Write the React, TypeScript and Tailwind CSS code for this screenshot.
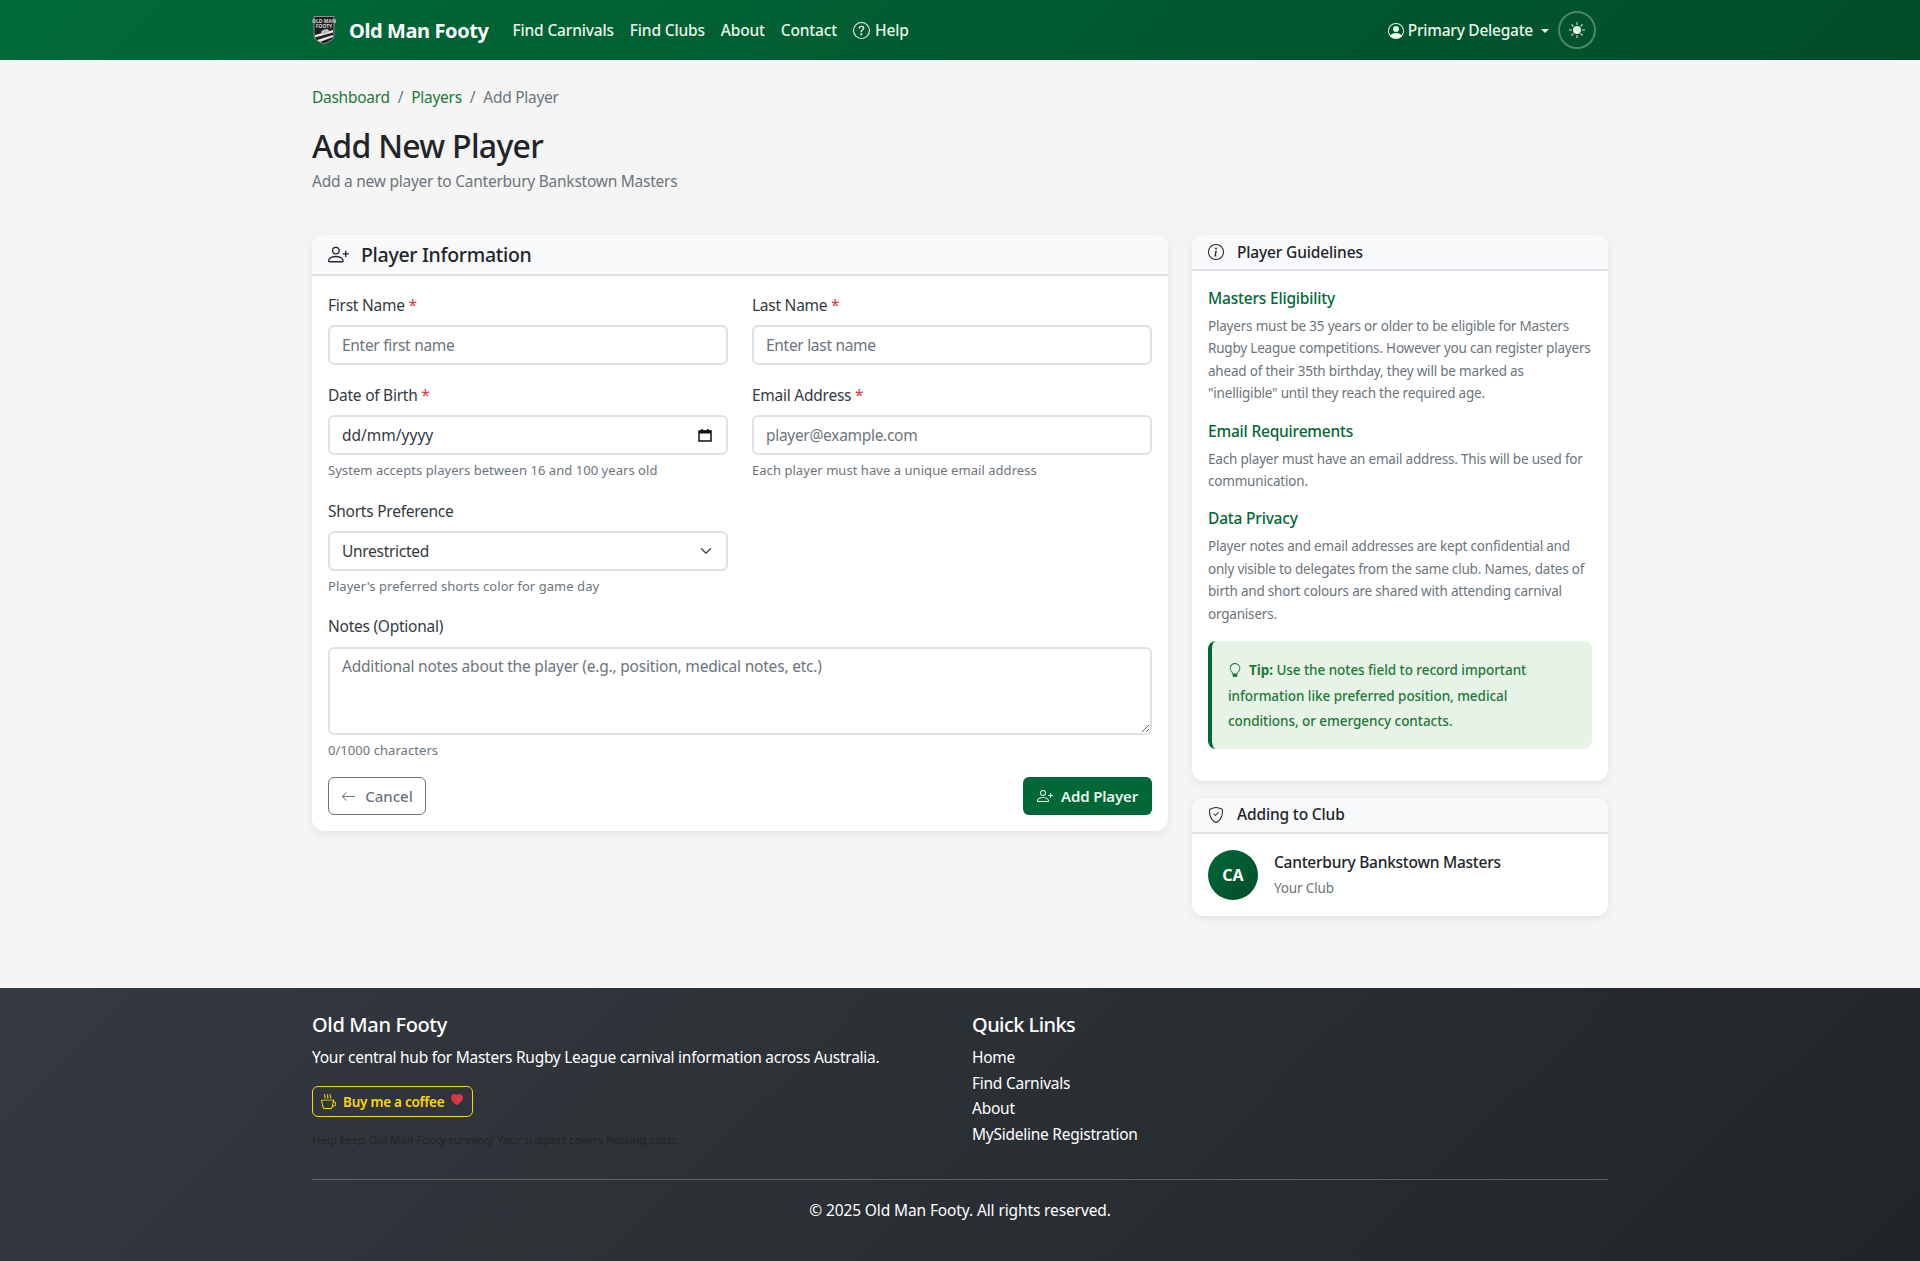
import React from 'react';
import {
  BsArrowLeft,
  BsChevronDown,
  BsCupHot,
  BsHeartFill,
  BsInfoCircle,
  BsLightbulb,
  BsPersonCircle,
  BsPersonPlus,
  BsQuestionCircle,
  BsShieldCheck,
  BsSunFill,
} from 'react-icons/bs';

const inputClass =
  'block w-full h-10 rounded-md border-2 border-[#dee2e6] bg-white px-[12px] text-[15.5px] tracking-[-0.3px] text-[#343a40] placeholder:text-[#6c757d] outline-none';

function Logo() {
  return (
    <svg viewBox="0 0 24 30" className="w-6 h-[30px]">
      <path d="M2 1.5h20v19.5c0 3-4.5 5.5-10 8-5.5-2.500-10-5-10-8z" fill="#1f1f1f" stroke="#8f8f8f" strokeWidth="1" />
      <text x="12" y="7.5" textAnchor="middle" fontSize="5" fontWeight="700" fill="#d4d4d4">OLD MAN</text>
      <text x="12" y="12.500" textAnchor="middle" fontSize="5" fontWeight="700" fill="#d4d4d4">FOOTY</text>
      <path d="M3 20l18-5v2.500L3 22.500zM5 25l16-5v2L8 27z" fill="#e5e5e5" />
      <ellipse cx="13" cy="16.500" rx="4" ry="2" fill="#bdbdbd" transform="rotate(-20 13 16.500)" />
    </svg>
  );
}

function CalendarIcon() {
  return (
    <svg viewBox="0 0 14 14" className="w-[14px] h-[14px]">
      <path d="M1 3h12v10H1z" fill="none" stroke="#111" strokeWidth="1.500" />
      <path d="M1 2.500h12v3H1zM3.500 1h1.500v2H3.500zM9 1h1.500v2H9z" fill="#111" />
    </svg>
  );
}

function Label({ text, required }: { text: string; required?: boolean }) {
  return (
    <label className="block h-[20px] mb-[10px] text-[15.5px] leading-[20px] tracking-[-0.25px] text-[#343a40]">
      {text}
      {required && <span className="text-[#dc3545]"> *</span>}
    </label>
  );
}

function Help({ children }: { children: React.ReactNode }) {
  return <p className="mt-[6px] h-[18px] text-[13px] leading-[18px] tracking-[0.05px] text-[#6c757d]">{children}</p>;
}

function CardHeader({ icon, title, large }: { icon: React.ReactNode; title: string; large?: boolean }) {
  return (
    <div
      className={`flex items-center bg-[#f8f9fa] border-b-2 border-[#dee2e6] rounded-t-xl px-4 ${
        large ? 'h-[41px] gap-3' : 'h-[36px] gap-[13px]'
      }`}
    >
      {icon}
      <h2
        className={`font-medium text-[#212529] ${
          large ? 'text-[19.500px] tracking-[-0.3px]' : 'pt-[1px] text-[15.500px] tracking-[-0.15px]'
        }`}
      >
        {title}
      </h2>
    </div>
  );
}

function Guideline({ title, children }: { title: string; children: React.ReactNode }) {
  return (
    <div className="mb-[14px]">
      <h3 className="text-[15.500px] leading-[24px] font-medium tracking-[-0.2px] text-[#006837] mb-[5px]">{title}</h3>
      <p className="text-[13.500px] leading-[22.400px] tracking-[-0.2px] text-[#6c757d]">{children}</p>
    </div>
  );
}

export default function App() {
  return (
    <div className="min-h-[1261px] flex flex-col bg-[#f5f5f5] font-['Noto_Sans',sans-serif]">
      <nav className="h-[60px] bg-[linear-gradient(135deg,#006b38,#004d29)] text-white">
        <div className="w-[1296px] mx-auto h-full flex items-center">
          <Logo />
          <span className="ml-[13px] pt-[1px] text-[20px] font-bold tracking-[-0.4px]">Old Man Footy</span>
          <div className="ml-6 pt-[1px] flex items-center gap-4 text-[15.500px] font-medium tracking-[-0.17px] text-[#e8f5ec]">
            <a>Find Carnivals</a>
            <a>Find Clubs</a>
            <a>About</a>
            <a>Contact</a>
            <a className="flex items-center gap-[5px]">
              <BsQuestionCircle className="w-[17px] h-[17px]" />
              Help
            </a>
          </div>
          <div className="ml-auto pt-[1px] flex items-center mr-[12px] text-[#e8f5ec]">
            <BsPersonCircle className="w-4 h-4" />
            <span className="ml-[4px] text-[15.500px] font-medium tracking-[-0.25px]">Primary Delegate</span>
            <span className="ml-2 border-x-[4px] border-x-transparent border-t-[4px] border-t-[#e8f5ec]" />
            <button className="ml-[9px] -mt-[1px] w-[38px] h-[38px] rounded-full border-2 border-white/30 flex items-center justify-center">
              <BsSunFill className="w-4 h-4" />
            </button>
          </div>
        </div>
      </nav>

      <main className="w-[1296px] mx-auto flex-1">
        <div className="mt-[26px] flex items-center gap-2 text-[15.500px] leading-[22px] tracking-[-0.28px]">
          <a className="text-[#1c7a35]">Dashboard</a>
          <span className="text-[#6c757d]">/</span>
          <a className="text-[#1c7a35]">Players</a>
          <span className="text-[#6c757d]">/</span>
          <span className="text-[#6c757d]">Add Player</span>
        </div>
        <h1 className="mt-[19px] text-[32px] leading-[38px] font-medium tracking-[-0.7px] text-[#212529]">Add New Player</h1>
        <p className="mt-[4px] text-[15.500px] leading-[24px] tracking-[-0.25px] text-[#6c757d]">
          Add a new player to Canterbury Bankstown Masters
        </p>

        <div className="mt-[42px] flex items-start gap-6">
          <section className="w-[856px] bg-white rounded-xl shadow-[0_2px_10px_rgba(0,0,0,0.08)]">
            <CardHeader
              large
              title="Player Information"
              icon={<BsPersonPlus className="w-[21px] h-[21px] text-[#212529]" />}
            />
            <div className="px-4 pt-[19px] pb-4">
              <div className="grid grid-cols-2 gap-x-6">
                <div>
                  <Label text="First Name" required />
                  <input className={inputClass} placeholder="Enter first name" />
                </div>
                <div>
                  <Label text="Last Name" required />
                  <input className={inputClass} placeholder="Enter last name" />
                </div>
                <div className="mt-[20px]">
                  <Label text="Date of Birth" required />
                  <div className="relative">
                    <input className={`${inputClass} tracking-[0px]`} defaultValue="dd/mm/yyyy" />
                    <span className="absolute right-[16px] top-[13px]">
                      <CalendarIcon />
                    </span>
                  </div>
                  <Help>System accepts players between 16 and 100 years old</Help>
                </div>
                <div className="mt-[20px]">
                  <Label text="Email Address" required />
                  <input className={inputClass} placeholder="player@example.com" />
                  <Help>Each player must have a unique email address</Help>
                </div>
                <div className="mt-[22px]">
                  <Label text="Shorts Preference" />
                  <div className="relative">
                    <select className={`${inputClass} appearance-none pt-[1px]`} defaultValue="Unrestricted">
                      <option>Unrestricted</option>
                    </select>
                    <BsChevronDown className="absolute right-[16px] top-[14px] w-3 h-3 stroke-[1] text-[#343a40]" />
                  </div>
                  <Help>Player's preferred shorts color for game day</Help>
                </div>
              </div>
              <div className="mt-[21px]">
                <Label text="Notes (Optional)" />
                <textarea
                  className="block w-full h-[88px] mt-[11px] rounded-md border-2 border-[#dee2e6] bg-white px-[12px] py-[6px] text-[15.500px] tracking-[-0.2px] text-[#212529] placeholder:text-[#6c757d] outline-none"
                  placeholder="Additional notes about the player (e.g., position, medical notes, etc.)"
                />
                <Help>0/1000 characters</Help>
              </div>
              <div className="mt-[18px] flex items-center justify-between">
                <button className="h-[38px] w-[98px] flex items-center justify-center gap-[9px] rounded-md border border-[#6c757d] text-[15px] font-medium text-[#6c757d]">
                  <BsArrowLeft className="w-[15px] h-[15px]" />
                  Cancel
                </button>
                <button className="h-[38px] w-[129px] flex items-center justify-center gap-2 rounded-md bg-[#006837] text-[15px] font-semibold tracking-[-0.15px] text-[#e8f5ec]">
                  <BsPersonPlus className="w-4 h-4" />
                  Add Player
                </button>
              </div>
            </div>
          </section>

          <aside className="w-[416px]">
            <section className="bg-white rounded-xl shadow-[0_2px_10px_rgba(0,0,0,0.08)]">
              <CardHeader title="Player Guidelines" icon={<BsInfoCircle className="w-4 h-4 text-[#212529]" />} />
              <div className="px-4 pt-[15px] pb-[32px]">
                <Guideline title="Masters Eligibility">
                  Players must be 35 years or older to be eligible for Masters Rugby League competitions. However you can
                  register players ahead of their 35th birthday, they will be marked as "inelligible" until they reach the
                  required age.
                </Guideline>
                <Guideline title="Email Requirements">
                  Each player must have an email address. This will be used for communication.
                </Guideline>
                <Guideline title="Data Privacy">
                  Player notes and email addresses are kept confidential and only visible to delegates from the same club.
                  Names, dates of birth and short colours are shared with attending carnival organisers.
                </Guideline>
                <div className="mt-[16px] rounded-lg border-l-4 border-[#006837] bg-[#e8f3e8] pl-4 pr-4 pt-[17px] pb-[14px] text-[13.500px] leading-[25.500px] font-medium tracking-[-0.05px] text-[#1c7a35]">
                  <BsLightbulb className="inline-block w-[14px] h-[14px] mr-[7px] -mt-[2px]" />
                  <strong className="font-bold">Tip:</strong> Use the notes field to record important information like
                  preferred position, medical conditions, or emergency contacts.
                </div>
              </div>
            </section>
            <section className="mt-[17px] bg-white rounded-xl shadow-[0_2px_10px_rgba(0,0,0,0.08)]">
              <CardHeader title="Adding to Club" icon={<BsShieldCheck className="w-4 h-4 text-[#212529]" />} />
              <div className="flex items-center gap-4 p-4">
                <div className="w-[50px] h-[50px] rounded-full bg-[linear-gradient(135deg,#006837,#004d29)] flex items-center justify-center text-[16px] font-bold text-white">
                  CA
                </div>
                <div>
                  <div className="text-[15.500px] leading-[24px] font-medium tracking-[-0.25px] text-[#212529]">
                    Canterbury Bankstown Masters
                  </div>
                  <div className="mt-[2px] text-[13.500px] leading-[24px] tracking-[-0.15px] text-[#6c757d]">Your Club</div>
                </div>
              </div>
            </section>
          </aside>
        </div>
      </main>

      <footer className="h-[273px] bg-[linear-gradient(135deg,#343a40,#212529)] text-white">
        <div className="w-[1296px] mx-auto pt-[24px]">
          <div className="flex">
            <div className="w-[660px]">
              <h5 className="text-[20px] leading-[26px] font-medium tracking-[-0.35px]">Old Man Footy</h5>
              <p className="mt-[7px] text-[15.500px] leading-[24px] tracking-[-0.27px]">
                Your central hub for Masters Rugby League carnival information across Australia.
              </p>
              <a className="mt-[17px] w-[161px] h-[31px] flex items-center rounded-md border border-[#ffd700] px-2 text-[#ffd700]">
                <BsCupHot className="w-[15px] h-[15px] shrink-0" />
                <span className="ml-[7px] pt-[1px] whitespace-nowrap text-[13.500px] font-semibold tracking-[-0.25px]">Buy me a coffee</span>
                <BsHeartFill className="ml-[7px] -mt-[3px] w-[12px] h-[12px] shrink-0 text-[#dc3545]" />
              </a>
              <p className="mt-[14px] text-[11.500px] leading-[18px] tracking-[-0.1px] text-[#212529]">
                Help keep Old Man Footy running! Your support covers hosting costs.
              </p>
            </div>
            <div>
              <h5 className="text-[20px] leading-[26px] font-medium tracking-[-0.55px]">Quick Links</h5>
              <ul className="mt-[7px] text-[15.500px] leading-[25.500px] tracking-[-0.25px]">
                <li>Home</li>
                <li>Find Carnivals</li>
                <li>About</li>
                <li>MySideline Registration</li>
              </ul>
            </div>
          </div>
          <hr className="mt-[30px] border-t border-white/25" />
          <p className="mt-[18px] text-center text-[15.500px] leading-[24px] tracking-[-0.12px]">
            © 2025 Old Man Footy. All rights reserved.
          </p>
        </div>
      </footer>
    </div>
  );
}
